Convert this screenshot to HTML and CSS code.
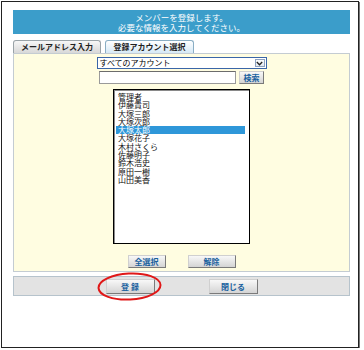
FILE: index.html
```html
<!DOCTYPE html>
<html lang="ja">
<head>
  <meta charset="UTF-8" />
  <title>メンバー登録</title>
  <link rel="stylesheet" href="styles.css">
</head>
<body>

<div class="frame">
  <div class="title">メンバーを登録します。<br>必要な情報を入力してください。</div>

  <div class="tabs">
    <div class="tab">メールアドレス入力</div>
    <div class="tab active">登録アカウント選択</div>
  </div>

  <div class="panel">
    <div class="select">
      <span>すべてのアカウント</span>
      <span class="arrow">
        <svg width="7" height="5" viewBox="0 0 7 5"><path d="M0.8 1 L3.5 3.8 L6.2 1" fill="none" stroke="#222" stroke-width="1.3"/></svg>
      </span>
    </div>

    <div class="search">
      <div class="input"></div>
      <button class="btn s-find">検索</button>
    </div>

    <ul class="list">
      <li>管理者</li>
      <li>伊藤貴司</li>
      <li>大塚三郎</li>
      <li>大塚次郎</li>
      <li class="sel">大塚太郎</li>
      <li>大塚花子</li>
      <li>木村さくら</li>
      <li>佐藤明子</li>
      <li>鈴木浩史</li>
      <li>原田一樹</li>
      <li>山田美香</li>
    </ul>

    <div class="row">
      <button class="btn s-all">全選択</button>
      <button class="btn s-clear">解除</button>
    </div>
  </div>

  <div class="bar">
    <div class="mark">
      <button class="btn big">登 録</button>
      <svg class="ring" width="65" height="29" viewBox="0 0 65 29">
        <ellipse cx="32.5" cy="14.5" rx="31" ry="13" fill="none" stroke="#e01818" stroke-width="2" transform="rotate(-3 32.5 14.5)"/>
      </svg>
    </div>
    <button class="btn big">閉じる</button>
  </div>
</div>

</body>
</html>
```

FILE: styles.css
```css
body {
  margin: 0;
  background: #fff;
  font-family: "Noto Sans CJK JP", "Noto Sans", sans-serif;
}
.frame {
  box-sizing: border-box;
  width: 358px;
  height: 347px;
  margin: 1px 0 0 1px;
  border: 1px solid #222;
  box-shadow: 1px 1px 0 #777;
  padding: 8px 8px 0 11px;
}
.title {
  box-sizing: border-box;
  height: 24px;
  padding-top: 3px;
  background: #3b9dca;
  color: #fff;
  text-align: center;
  font-size: 8.5px;
  line-height: 9.5px;
}
.tabs {
  display: flex;
  gap: 4px;
  margin-top: 6px;
  height: 13px;
}
.tab {
  box-sizing: border-box;
  width: 88px;
  height: 13px;
  border: 1px solid #9aa3a8;
  border-bottom: none;
  border-radius: 3px 3px 0 0;
  background: linear-gradient(#f7f7f7, #d8d8d8);
  text-align: center;
  font-size: 8px;
  font-weight: bold;
  line-height: 12px;
  color: #222;
}
.tab.active {
  width: 89px;
  border-color: #8aaec4;
  background: linear-gradient(#ffffff, #d6e9f6);
}
.panel {
  display: flex;
  flex-direction: column;
  align-items: center;
  background: #fffde1;
  border: 1px solid #c4ccd2;
  padding: 3px 0 3px;
}
.select {
  box-sizing: border-box;
  width: 170px;
  height: 12px;
  border: 1px solid #3a66a8;
  background: #fff;
  display: flex;
  justify-content: space-between;
  align-items: center;
  font-size: 8px;
  line-height: 10px;
  padding: 0 1px 0 2px;
}
.arrow {
  box-sizing: border-box;
  width: 10px;
  height: 8px;
  border: 1px solid #8ea2bf;
  background: linear-gradient(#fdfdfd, #e2e8f0);
  display: flex;
  align-items: center;
  justify-content: center;
}
.search {
  display: flex;
  gap: 3px;
  margin-top: 2px;
}
.input {
  box-sizing: border-box;
  width: 137px;
  height: 13px;
  background: #fff;
  border: 1px solid #9a9a9a;
  border-top-color: #6c6c6c;
}
.btn {
  box-sizing: border-box;
  padding: 0;
  border: 1px solid;
  border-color: #d0d0d0 #7a7a7a #7a7a7a #d0d0d0;
  background: linear-gradient(#f8f8f8, #d4d4d4);
  color: #17609e;
  font-family: "Noto Sans CJK JP", "Noto Sans", sans-serif;
  font-size: 8px;
  font-weight: bold;
  line-height: 11px;
  height: 13px;
}
.s-find {
  width: 25px;
}
.list {
  box-sizing: border-box;
  list-style: none;
  margin: 5px 0 0;
  width: 137px;
  height: 155px;
  padding: 3px 4px 0 2px;
  background: #fff;
  border: 1px solid #000;
  box-shadow: inset 1px 1px 0 #8a8a8a;
}
.list li {
  height: 8.3px;
  line-height: 8.3px;
  font-size: 8px;
  padding-left: 2px;
  color: #111;
  white-space: nowrap;
}
.list li.sel {
  background: #2e97d9;
  color: #fff;
}
.row {
  display: flex;
  gap: 22px;
  margin-top: 11px;
}
.s-all {
  width: 38px;
}
.s-clear {
  width: 48px;
}
.bar {
  box-sizing: border-box;
  height: 20px;
  margin-top: 4px;
  background: #e3e3e3;
  border: 1px solid #b6c3cc;
  display: flex;
  justify-content: center;
  align-items: center;
  gap: 54px;
}
.btn.big {
  width: 49px;
  height: 15px;
  line-height: 13px;
}
.mark {
  position: relative;
  display: flex;
}
.ring {
  position: absolute;
  left: -9px;
  top: -7px;
}
```
